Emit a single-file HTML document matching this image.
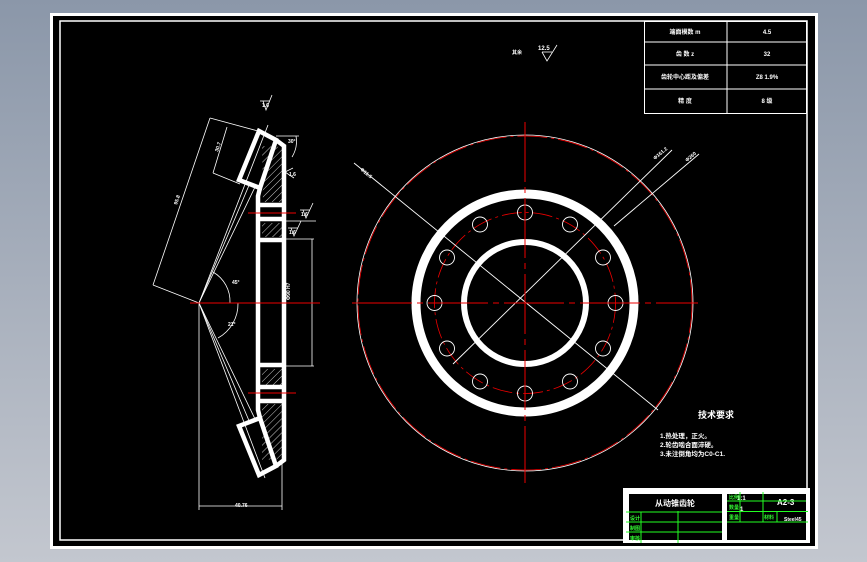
<!DOCTYPE html>
<html><head><meta charset="utf-8"><style>
html,body{margin:0;padding:0;width:867px;height:562px;overflow:hidden;background:linear-gradient(#8b97a9,#c3c7cf);}
svg{display:block}
text{font-family:"Liberation Sans","Noto Sans CJK SC",sans-serif;fill:#fff;font-weight:bold}
</style></head><body>
<svg width="867" height="562" viewBox="0 0 867 562" xmlns="http://www.w3.org/2000/svg">
<defs>
<pattern id="h" width="5" height="5" patternUnits="userSpaceOnUse" patternTransform="rotate(45)">
<line x1="0" y1="0" x2="0" y2="5" stroke="#fff" stroke-width="0.8"/></pattern>
</defs>
<rect x="50" y="13" width="768" height="536" fill="#000"/>
<rect x="51.5" y="14.5" width="765" height="533" fill="none" stroke="#fff" stroke-width="3"/>
<rect x="60" y="21" width="747" height="519" fill="none" stroke="#fff" stroke-width="1.5"/>

<!-- top-right table -->
<g stroke="#fff" stroke-width="1" fill="none">
<rect x="644.5" y="21.5" width="162" height="92"/>
<line x1="644" y1="42" x2="807" y2="42"/><line x1="644" y1="65" x2="807" y2="65"/><line x1="644" y1="89" x2="807" y2="89"/>
<line x1="727" y1="21" x2="727" y2="114"/>
</g>
<g font-size="6" text-anchor="middle">
<text x="685" y="34">端面模数 m</text><text x="767" y="34">4.5</text>
<text x="685" y="56">齿 数 z</text><text x="767" y="56">32</text>
<text x="685" y="79">齿轮中心距及偏差</text><text x="767" y="79">Z8 1.9%</text>
<text x="685" y="103">精 度</text><text x="767" y="103">8 级</text>
</g>
<!-- roughness top -->
<text x="512" y="54" font-size="5">其余</text>
<text x="538" y="50" font-size="6">12.5</text>
<polyline points="542,52 547,61 557,45" fill="none" stroke="#fff" stroke-width="0.8"/>
<line x1="542" y1="52" x2="552" y2="52" stroke="#fff" stroke-width="0.8"/>

<!-- main view -->
<g fill="none">
<circle cx="525" cy="303" r="168" stroke="#fff" stroke-width="0.8"/>
<circle cx="525" cy="303" r="167" stroke="#e00" stroke-width="0.8" stroke-dasharray="30 4 3 4"/>
<circle cx="525" cy="303" r="109" stroke="#fff" stroke-width="9"/>
<circle cx="525" cy="303" r="61" stroke="#fff" stroke-width="6"/>
<circle cx="525" cy="303" r="90.5" stroke="#e00" stroke-width="0.8" stroke-dasharray="20 4 3 4"/>
<g stroke="#fff" stroke-width="0.9">
<circle cx="525" cy="212.5" r="7.5"/><circle cx="570" cy="224.5" r="7.5"/><circle cx="603" cy="257.5" r="7.5"/>
<circle cx="615.5" cy="303" r="7.5"/><circle cx="603" cy="348.5" r="7.5"/><circle cx="570" cy="381.5" r="7.5"/>
<circle cx="525" cy="393.5" r="7.5"/><circle cx="480" cy="381.5" r="7.5"/><circle cx="447" cy="348.5" r="7.5"/>
<circle cx="434.5" cy="303" r="7.5"/><circle cx="447" cy="257.5" r="7.5"/><circle cx="480" cy="224.5" r="7.5"/>
<line x1="354" y1="163" x2="658" y2="410"/>
<line x1="672" y1="150" x2="453" y2="364"/>
<line x1="699" y1="154" x2="614" y2="226"/>
</g>
<line x1="352" y1="303" x2="698" y2="303" stroke="#e00" stroke-width="1" stroke-dasharray="60 5 6 5"/>
<line x1="525" y1="122" x2="525" y2="483" stroke="#e00" stroke-width="1" stroke-dasharray="60 5 6 5"/>
</g>
<text x="360" y="170" font-size="5" transform="rotate(40 360 170)">Φ11.5</text>
<text x="655" y="160" font-size="5" transform="rotate(-40 655 160)">Φ161.2</text>
<text x="687" y="162" font-size="5" transform="rotate(-40 687 162)">Φ260</text>

<!-- notes -->
<text x="698" y="418" font-size="9">技术要求</text>
<g font-size="6.5"><text x="660" y="438">1.热处理，正火。</text><text x="660" y="447">2.轮齿啮合面淬硬。</text><text x="660" y="456">3.未注倒角均为C0-C1.</text></g>

<!-- left section view -->
<g fill="none" stroke="#fff">
<path d="M262,146 L284,147 L284,202 L263,202 Z" fill="url(#h)" stroke="none"/>
<path d="M262,223 H284 V237 H262 Z" fill="url(#h)" stroke="none"/>
<path d="M262,369 H284 V385 H262 Z" fill="url(#h)" stroke="none"/>
<path d="M262,404 L284,404 L284,459 L262,460 Z" fill="url(#h)" stroke="none"/>
<g stroke-width="4.5">
<polygon points="259,131 276,140 260,188 239,180"/>
<polygon points="259,475 276,466 260,418 239,426"/>
<polyline points="276,140 284,146 284,460 276,466"/>
<polyline points="260,188 258,196 258,410 260,418"/>
<line x1="258" y1="205" x2="284" y2="205"/><line x1="258" y1="219" x2="284" y2="219"/>
<line x1="258" y1="240" x2="284" y2="240"/><line x1="258" y1="365" x2="284" y2="365"/>
<line x1="258" y1="387" x2="284" y2="387"/><line x1="258" y1="401" x2="284" y2="401"/>
</g>
<g stroke-width="0.8">
<line x1="199" y1="303" x2="250" y2="183"/><line x1="199" y1="303" x2="256" y2="185"/>
<line x1="199" y1="303" x2="250" y2="423"/><line x1="199" y1="303" x2="256" y2="421"/>
<line x1="199" y1="303" x2="268" y2="125"/>
<line x1="199" y1="303" x2="265" y2="478"/>
<line x1="210" y1="118" x2="153" y2="285"/><line x1="153" y1="285" x2="199" y2="303"/><line x1="210" y1="118" x2="258" y2="131"/>
<line x1="227" y1="127" x2="213" y2="173"/><line x1="213" y1="173" x2="240" y2="184"/>
<path d="M213,272 A34,34 0 0 1 230,303"/><path d="M238,303 A39,39 0 0 1 218,338"/>
<line x1="199" y1="303" x2="199" y2="510"/><line x1="282" y1="462" x2="282" y2="510"/>
<line x1="199" y1="506" x2="282" y2="506"/>
<line x1="284" y1="239" x2="314" y2="239"/><line x1="284" y1="366" x2="314" y2="366"/>
<line x1="312" y1="239" x2="312" y2="366"/>
<line x1="284" y1="221" x2="316" y2="221"/>
<line x1="276" y1="136" x2="299" y2="136"/><path d="M296,136 A30,30 0 0 1 292,157"/>
<polyline points="263,101 266,110 272,95"/><line x1="260" y1="101" x2="270" y2="101"/>
<polyline points="303,210 306,218 313,203"/><line x1="300" y1="210" x2="310" y2="210"/>
<polyline points="291,228 294,236 301,221"/><line x1="288" y1="228" x2="298" y2="228"/>
<polyline points="293,168 285,172 294,178"/>
</g>
</g>
<g stroke="#e00" stroke-width="1">
<line x1="248" y1="213" x2="296" y2="213"/><line x1="248" y1="393" x2="296" y2="393"/>
<line x1="190" y1="303" x2="320" y2="303"/>
</g>
<g font-size="5">
<text x="262" y="107">1.6</text><text x="301" y="216">1.6</text><text x="289" y="234">1.6</text>
<text x="235" y="507">40.76</text>
<text x="177" y="205" transform="rotate(-72 177 205)">95.8</text>
<text x="218" y="152" transform="rotate(-72 218 152)">30.7</text>
<text x="232" y="284">45°</text><text x="228" y="326">21°</text>
<text x="300" y="290" transform="rotate(-90 300 300)">Φ90 H7</text>
<text x="288" y="143">30°</text><text x="289" y="176">1.6</text>
</g>

<!-- title block -->
<rect x="623" y="488" width="187" height="55" fill="#fff"/>
<rect x="629" y="494" width="93" height="46" fill="#000"/>
<rect x="727" y="494" width="79" height="46" fill="#000"/>
<text x="655" y="506" font-size="8">从动锥齿轮</text>
<text x="737" y="500" font-size="6" fill="#fff">1:1</text>
<text x="740" y="511" font-size="6">1</text>
<text x="777" y="505" font-size="8">A2-3</text>
<text x="784" y="521" font-size="5">Steel45</text>
<g stroke="#2f2" stroke-width="1">
<line x1="626" y1="512" x2="722" y2="512"/><line x1="626" y1="522" x2="722" y2="522"/><line x1="626" y1="532" x2="722" y2="532"/>
<line x1="641" y1="512" x2="641" y2="543"/><line x1="678" y1="511" x2="678" y2="543"/>
<line x1="727" y1="501" x2="806" y2="501"/><line x1="727" y1="511.5" x2="808" y2="511.5"/><line x1="727" y1="522" x2="808" y2="522"/>
<line x1="740" y1="492" x2="740" y2="522"/><line x1="763" y1="492" x2="763" y2="522"/><line x1="777" y1="511" x2="777" y2="522"/>
</g>
<g font-size="5" fill="#2f2" style="fill:#3f3">
<text x="729" y="499" style="fill:#3f3">比例</text><text x="729" y="509" style="fill:#3f3">数量</text><text x="729" y="519" style="fill:#3f3">重量</text>
<text x="764" y="519" style="fill:#3f3">材料</text>
<text x="630" y="520" style="fill:#3f3">设计</text><text x="630" y="530" style="fill:#3f3">制图</text><text x="630" y="540" style="fill:#3f3">审核</text>
</g>
</svg>
</body></html>
